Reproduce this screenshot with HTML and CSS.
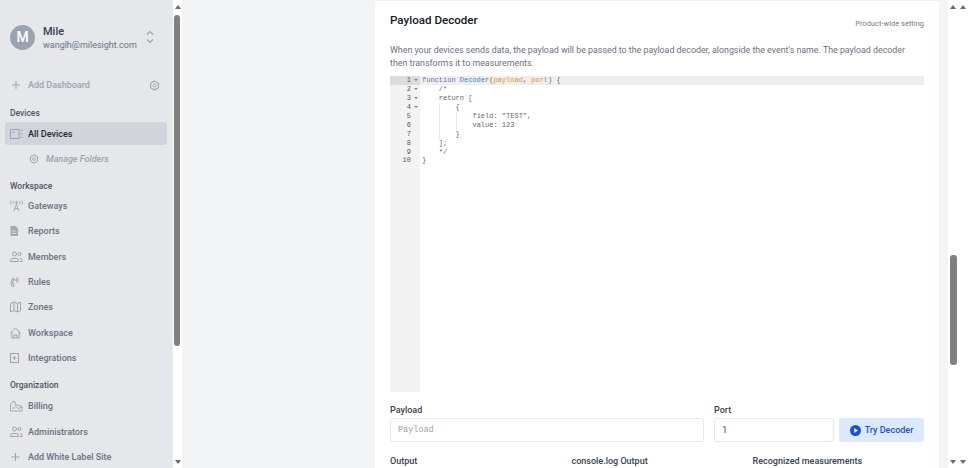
FILE: index.html
```html
<!DOCTYPE html>
<html lang="en">
<head>
<meta charset="utf-8">
<title>Payload Decoder</title>
<link rel="stylesheet" href="styles.css">
</head>
<body>
<div class="app">
  <aside class="sidebar">
    <div class="user">
      <div class="avatar">M</div>
      <div class="user-text">
        <div class="user-name">Mile</div>
        <div class="user-mail">wanglh@milesight.com</div>
      </div>
      <svg class="chev" viewBox="0 0 10 18" width="10" height="18"><path d="M2 6.500 5 3.500 8 6.500M2 11.500 5 14.500 8 11.500" fill="none" stroke="#9ca3af" stroke-width="1.200"/></svg>
    </div>
    <div class="add-dash">
      <svg class="ico-plus" viewBox="0 0 12 12" width="12" height="12"><path d="M6 2v8M2 6h8" stroke="#9ca3af" stroke-width="1"/></svg>
      <span class="add-label">Add Dashboard</span>
      <svg class="gear" viewBox="0 0 12 12" width="11" height="11"><path d="M6 1 10.300 3.500v5L6 11 1.700 8.500v-5z" fill="none" stroke="#9ca3af" stroke-width="1.200"/><circle cx="6" cy="6" r="1.700" fill="none" stroke="#9ca3af"/></svg>
    </div>
    <div class="sec sec-first">Devices</div>
    <div class="item active">
      <svg class="ico" viewBox="0 0 14 12" width="14" height="12"><rect x=".5" y="1.500" width="8.500" height="9" fill="none" stroke="#9ca3af"/><path d="M2 4h3M10.500 2.500h2M10.500 6h2M10.500 9.500h2" stroke="#9ca3af"/></svg>
      <span>All Devices</span>
    </div>
    <div class="item sub">
      <svg viewBox="0 0 12 12" width="10" height="10"><path d="M6 1 10.300 3.500v5L6 11 1.700 8.500v-5z" fill="none" stroke="#9ca3af" stroke-width="1.200"/><circle cx="6" cy="6" r="1.700" fill="none" stroke="#9ca3af"/></svg>
      <span>Manage Folders</span>
    </div>
    <div class="sec">Workspace</div>
    <div class="item">
      <svg class="ico" viewBox="0 0 14 12" width="14" height="12"><path d="M6.500 4 4 11M6.500 4 9 11M4.800 8.500h3.400M3.500 1Q2.500 2.500 3.500 4M9.500 1Q10.500 2.500 9.500 4M1.200 .5Q-.3 2.500 1.200 4.500M11.800 .5Q13.300 2.500 11.800 4.500" fill="none" stroke="#9ca3af" stroke-width=".9"/><circle cx="6.500" cy="2.500" r="1.200" fill="#9ca3af"/></svg>
      <span>Gateways</span>
    </div>
    <div class="item">
      <svg class="ico" viewBox="0 0 14 12" width="14" height="12"><path d="M.5 1h5L8 3.500V11H.5z" fill="#a3a9b3"/><path d="M2 6h4.500M2 8.500h4.500" stroke="#e5e7eb" stroke-width=".8"/></svg>
      <span>Reports</span>
    </div>
    <div class="item">
      <svg class="ico" viewBox="0 0 14 12" width="14" height="12"><circle cx="4.500" cy="3" r="2" fill="none" stroke="#9ca3af"/><path d="M.5 10.500V9.500Q.5 7.500 3 7.500h3Q8.500 7.500 8.500 9.500V10.500z" fill="none" stroke="#9ca3af"/><circle cx="9.500" cy="3" r="1.500" fill="none" stroke="#9ca3af"/><path d="M10 7.500q2 0 2 2v1H10" fill="none" stroke="#9ca3af"/></svg>
      <span>Members</span>
    </div>
    <div class="item">
      <svg class="ico" viewBox="0 0 14 12" width="14" height="12"><path d="M2.500 3Q0 6.500 1.500 10q1.500 1.500 2.500 0L3.500 7.500 2.500 7.500 3 4.500 4 4 3.500 2z" fill="none" stroke="#9ca3af"/><path d="M6.500 2v4M8 1v6M5.200 3v2" stroke="#9ca3af" stroke-width=".8"/></svg>
      <span>Rules</span>
    </div>
    <div class="item">
      <svg class="ico" viewBox="0 0 14 12" width="14" height="12"><path d="M.5 2.500 4 1l3.500 1.500L10.500 1v8.500L7.500 11 4 9.500.5 11zM4 1v8.500M7.500 2.500V11" fill="none" stroke="#9ca3af"/></svg>
      <span>Zones</span>
    </div>
    <div class="item">
      <svg class="ico" viewBox="0 0 14 12" width="14" height="12"><path d="M.3 6.500 5.500 1l5.200 5.500M1.800 5v6h7.400V5M4 11V8h3v3" fill="none" stroke="#9ca3af"/></svg>
      <span>Workspace</span>
    </div>
    <div class="item">
      <svg class="ico" viewBox="0 0 14 12" width="14" height="12"><rect x=".5" y="1.500" width="8" height="9" fill="none" stroke="#9ca3af"/><path d="M2.500 6h4M4.500 4v4" stroke="#9ca3af"/></svg>
      <span>Integrations</span>
    </div>
    <div class="sec sec-org">Organization</div>
    <div class="item">
      <svg class="ico" viewBox="0 0 14 12" width="14" height="12"><path d="M.5 11V5L3 1.500h2L5 4.500l7 2V11zM5 6l5 3.500M2 8h3M9.500 7.500h2" fill="none" stroke="#9ca3af" stroke-width=".9"/></svg>
      <span>Billing</span>
    </div>
    <div class="item">
      <svg class="ico" viewBox="0 0 14 12" width="14" height="12"><circle cx="4.500" cy="3" r="2" fill="none" stroke="#9ca3af"/><path d="M.5 10.500V9.500Q.5 7.500 3 7.500h3Q8.500 7.500 8.500 9.500V10.500z" fill="none" stroke="#9ca3af"/><circle cx="9.500" cy="3" r="1.500" fill="none" stroke="#9ca3af"/><path d="M10 7.500q2 0 2 2v1H10" fill="none" stroke="#9ca3af"/></svg>
      <span>Administrators</span>
    </div>
    <div class="item">
      <svg class="ico" viewBox="0 0 14 12" width="14" height="12"><path d="M5.500 2v8M1.500 6h8" stroke="#9ca3af"/></svg>
      <span>Add White Label Site</span>
    </div>
  </aside>
  <div class="side-bar-scroll">
    <div class="arrow up"></div>
    <div class="track"><div class="thumb thumb-side"></div></div>
    <div class="arrow down"></div>
  </div>
  <main class="main">
    <section class="card">
      <div class="head">
        <h2 class="title">Payload Decoder</h2>
        <span class="hint">Product-wide setting</span>
      </div>
      <p class="desc">When your devices sends data, the payload will be passed to the payload decoder, alongside the event's name. The payload decoder then transforms it to measurements.</p>
      <div class="editor">
        <div class="gutter">
          <div class="gl on">1<i></i></div><div class="gl">2<i></i></div><div class="gl">3<i></i></div><div class="gl">4<i></i></div><div class="gl">5</div><div class="gl">6</div><div class="gl">7</div><div class="gl">8</div><div class="gl">9</div><div class="gl">10</div>
        </div>
        <div class="code">
          <div class="cl on"><span class="kw">function</span> <span class="fn">Decoder</span>(<span class="pm">payload</span>, <span class="pm">port</span>) {</div>
          <div class="cl">    /*</div>
          <div class="cl">    return [</div>
          <div class="cl">    <b></b>    {</div>
          <div class="cl">    <b></b>    <b></b>    field: "TEST",</div>
          <div class="cl">    <b></b>    <b></b>    value: 123</div>
          <div class="cl">    <b></b>    }</div>
          <div class="cl">    ];</div>
          <div class="cl">    */</div>
          <div class="cl">}</div>
        </div>
      </div>
      <div class="form">
        <div class="f-payload">
          <label class="lab">Payload</label>
          <div class="input mono">Payload</div>
        </div>
        <div class="f-port">
          <label class="lab">Port</label>
          <div class="input port">1</div>
        </div>
        <button class="try">
          <svg viewBox="0 0 12 12" width="11" height="11"><circle cx="6" cy="6" r="6" fill="#1d4ed8"/><path d="M4.500 3.300v5.400L8.800 6z" fill="#dbeafe"/></svg>
          Try Decoder
        </button>
      </div>
      <div class="outs">
        <div class="lab">Output</div>
        <div class="lab">console.log Output</div>
        <div class="lab">Recognized measurements</div>
      </div>
    </section>
  </main>
  <div class="page-gap"></div>
  <div class="page-scroll">
    <div class="col">
      <div class="arrow up"></div>
      <div class="track"><div class="thumb thumb-page"></div></div>
      <div class="arrow down"></div>
    </div>
    <div class="col">
      <div class="arrow up"></div>
      <div class="track"></div>
      <div class="arrow down"></div>
    </div>
  </div>
</div>
</body>
</html>
```
FILE: styles.css
```css
* { box-sizing: border-box; }
html, body { margin: 0; height: 100%; overflow: hidden; }
body { font-family: Roboto, "Liberation Sans", sans-serif; background: #fff; }
.app { display: flex; width: 968px; height: 468px; overflow: hidden; }

.sidebar { width: 173px; flex: none; background: #e5e7eb; padding-left: 5px; padding-right: 6px; overflow: hidden; }
.user { display: flex; align-items: center; height: 30px; margin-top: 22px; padding-left: 5px; }
.avatar { width: 25px; height: 25px; border-radius: 50%; background: #9ca3af; color: #fff; font-size: 14px; font-weight: 500; display: flex; align-items: center; justify-content: center; flex: none; }
.user-text { margin-left: 8px; width: 97px; flex: none; padding-top: 2px; }
.user-name { font-size: 11px; font-weight: 500; line-height: 14px; color: #374151; }
.user-mail { font-size: 9px; line-height: 13px; color: #6b7280; white-space: nowrap; }
.chev { margin-left: 5px; flex: none; }
.add-dash { display: flex; align-items: center; height: 14px; margin-top: 26px; padding-left: 5px; font-size: 9px; font-weight: 500; color: #9ca3af; }
.add-label { margin-left: 6px; width: 121px; flex: none; }
.sec { font-size: 8.500px; font-weight: 500; color: #4b5563; padding-left: 5px; line-height: 12px; margin-top: 10px; height: 14px; }
.sec-first { margin-top: 15px; height: 15px; }
.sec-org { margin-top: 9px; height: 16px; }
.item { display: flex; align-items: center; height: 23px; margin-bottom: 2.400px; padding-left: 5px; font-size: 9px; font-weight: 500; color: #6b7280; white-space: nowrap; }
.item .ico { margin-right: 4px; flex: none; }
.item.active { background: #d1d5db; border-radius: 3px; color: #1f2937; }
.item.sub { padding-left: 24px; color: #9ca3af; font-style: italic; }
.item.sub svg { margin-right: 7px; }

.side-bar-scroll { width: 9px; flex: none; background: #fff; display: flex; flex-direction: column; }
.arrow { height: 13px; flex: none; position: relative; }
.arrow::after { content: ""; position: absolute; left: 50%; margin-left: -3px; top: 5px; border-left: 3px solid transparent; border-right: 3px solid transparent; }
.arrow.up::after { border-bottom: 4px solid #6b6b6b; }
.arrow.down::after { border-top: 4px solid #6b6b6b; }
.track { flex: 1; position: relative; }
.thumb { position: absolute; background: #808080; border-radius: 3px; }
.thumb-side { left: 1px; right: 2px; top: 2px; height: 331px; }

.main { flex: 1; background: #f3f4f6; padding-left: 193px; min-width: 0; }
.card { background: #fff; height: 468px; padding: 11px 15px 0; border-top: 1px solid #eef0f2; overflow: hidden; }
.head { display: flex; justify-content: space-between; align-items: flex-start; }
.title { margin: 0; font-size: 11.600px; font-weight: 500; line-height: 16px; color: #111827; }
.hint { font-size: 7.500px; color: #777b83; line-height: 10px; margin-top: 7px; }
.desc { margin: 15px 0 0; font-size: 8.850px; line-height: 13px; color: #6b7280; }
.editor { display: flex; margin-top: 6px; height: 316px; font-family: "Liberation Mono", monospace; font-size: 7px; line-height: 9px; }
.gutter { width: 30px; background: #f3f3f3; flex: none; color: #555; }
.gl { height: 8.950px; text-align: right; padding-right: 9px; position: relative; }
.gl.on { background: #dcdcdc; }
.gl i { position: absolute; right: 2px; top: 3px; border-left: 2px solid transparent; border-right: 2px solid transparent; border-top: 2px solid #888; }
.code { flex: 1; color: #666; }
.cl { height: 8.950px; padding-left: 2px; white-space: pre; }
.cl.on { background: #eeeeee; }
.cl b { display: inline-block; width: 1px; margin-right: -1px; height: 9px; background: #e8e8e8; vertical-align: top; }
.kw { color: #7c6bb0; }
.fn { color: #4a7fb0; }
.pm { color: #e0913c; }

.form { display: flex; align-items: flex-end; margin-top: 6px; }
.f-payload { width: 314px; flex: none; }
.f-port { width: 120px; margin-left: 10px; flex: none; }
.lab { font-size: 9px; font-weight: 500; color: #374151; line-height: 12px; }
.input { height: 24px; margin-top: 1px; border: 1px solid #e5e7eb; border-radius: 3px; background: #fff; padding-left: 7px; font-size: 9.500px; line-height: 22px; color: #4b5563; }
.input.mono { font-family: "Liberation Mono", monospace; font-size: 8.500px; color: #9ca3af; }
.try { margin-left: 5px; flex: 1; height: 24px; border: 0; border-radius: 3px; background: #dbeafe; color: #1d4ed8; font: 500 9px Roboto, sans-serif; display: flex; align-items: center; justify-content: center; gap: 4px; padding: 0; }
.outs { display: grid; grid-template-columns: 181.500px 181px 1fr; margin-top: 13px; }

.page-gap { width: 9px; flex: none; background: #f3f4f6; }
.page-scroll { width: 20px; flex: none; display: flex; background: #fff; }
.col { width: 10px; display: flex; flex-direction: column; }
.thumb-page { left: 2px; right: 1px; top: 242px; height: 110px; }
```
